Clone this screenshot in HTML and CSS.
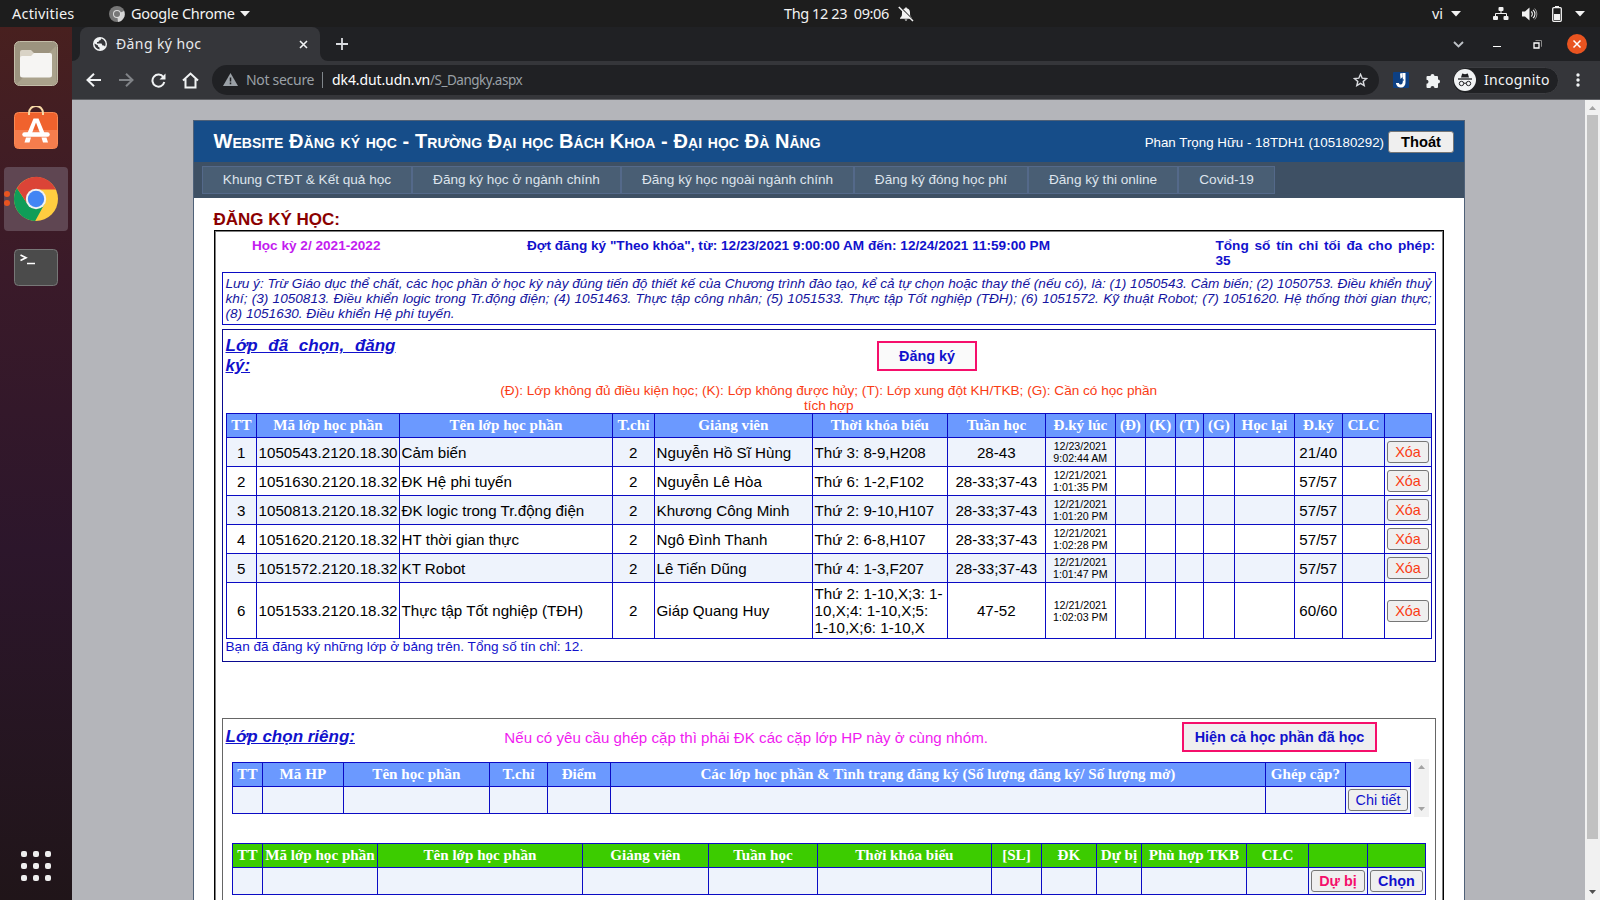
FILE: index.html
```html
<!DOCTYPE html>
<html lang="vi">
<head>
<meta charset="utf-8">
<title>Đăng ký học</title>
<link rel="stylesheet" href="styles.css">
</head>
<body>
<header class="topbar">
  <span class="activities">Activities</span>
  <svg class="tb-chrome" width="16" height="16" viewBox="0 0 16 16"><circle cx="8" cy="8" r="8" fill="#777"/><path d="M8 8 15 5A8 8 0 0 1 9 16z" fill="#d6d6d6"/><circle cx="8" cy="8" r="4" fill="#ddd"/><circle cx="8" cy="8" r="3" fill="#777"/></svg>
  <span class="app-name">Google Chrome</span>
  <svg class="caret" width="10" height="6"><path d="M0 0h10L5 5.5z" fill="#f2f2f2"/></svg>
  <span class="clock">Thg 12 23&nbsp; 09:06</span>
  <svg class="bell" width="16" height="16" viewBox="0 0 16 16"><path d="M2 12c2-1.500 2-3 2-5.500C4 4 5.500 2.600 7.200 2.300V1.500h1.600v.8C10.500 2.600 12 4 12 6.500c0 2.500 0 4 2 5.500v.8H2z" fill="#f2f2f2"/><path d="M6.500 13.500h3L8 15z" fill="#f2f2f2"/><path d="M1.500 .5 15.500 14.500" stroke="#1d1d1d" stroke-width="1.500"/><path d="M.8 1 15 15" stroke="#f2f2f2" stroke-width="1.500"/></svg>
  <span class="lang">vi</span>
  <svg class="caret2" width="10" height="6"><path d="M0 0h10L5 5.500z" fill="#f2f2f2"/></svg>
  <svg class="net" width="16" height="14" viewBox="0 0 16 14"><g fill="#f2f2f2"><rect x="5.500" y="0" width="5" height="4" rx="1"/><rect x="0" y="9" width="5" height="4" rx="1"/><rect x="10.500" y="9" width="5" height="4" rx="1"/></g><path d="M8 4v2.500M2.500 9V6.500h11V9" fill="none" stroke="#f2f2f2"/></svg>
  <svg class="vol" width="16" height="14" viewBox="0 0 16 14"><path d="M0 4.500h3L7.500.5v13L3 9.500H0z" fill="#f2f2f2"/><path d="M9.300 4.500a3.500 3.500 0 0 1 0 5M11 2.800a5.500 5.500 0 0 1 0 8.400" fill="none" stroke="#f2f2f2" stroke-width="1.100"/><path d="M12.700 1.500a8 8 0 0 1 0 11" fill="none" stroke="#999"/></svg>
  <svg class="bat" width="10" height="16" viewBox="0 0 10 16"><rect x=".7" y="1.700" width="8.600" height="13.600" rx="1" fill="none" stroke="#f2f2f2" stroke-width="1.300"/><rect x="3" y="0" width="4" height="1.500" fill="#f2f2f2"/><rect x="2" y="8" width="6" height="6" fill="#f2f2f2"/></svg>
  <svg class="caret3" width="10" height="6"><path d="M0 0h10L5 5.500z" fill="#f2f2f2"/></svg>
</header>
<div class="desktop">
  <aside class="dock">
    <svg class="d-files" width="44" height="45" viewBox="0 0 44 45"><rect x=".5" y=".5" width="43" height="44" rx="5" fill="#9c937f" stroke="#c4bda9"/><path d="M2 43.500 42 5v36a3 3 0 0 1-3 3z" fill="#aaa28c"/><path d="M6 12V11a2 2 0 0 1 2-2h9l3 3h12v5H6z" fill="#d9d3c6"/><path d="M6 17a2 2 0 0 1 2-2h9l3-3h16a2 2 0 0 1 2 2v20a2.500 2.500 0 0 1-2.500 2.500h-27A2.500 2.500 0 0 1 6 34z" fill="#f6f5f3"/></svg>
    <svg class="d-store" width="44" height="43" viewBox="0 0 44 43"><rect x=".5" y="6.500" width="43" height="36" rx="4" fill="#f0622d" stroke="#f98a55"/><path d="M1 24h42v15a3 3 0 0 1-3 3H4a3 3 0 0 1-3-3z" fill="#f57d4d"/><path d="M15 9V7a7 7 0 0 1 14 0v2" fill="none" stroke="#f7d9a6" stroke-width="2"/><path d="M13.500 27 19.500 12.500h5L30.500 27h-4.500L22 16.500 18 27z" fill="#fff"/><path d="M10.500 28.500h23" stroke="#fff" stroke-width="4.500" stroke-linecap="round"/><path d="M12 31.500h5l-1.500 5h-5zM27.500 31.500h5l1.500 5h-5z" fill="#fff"/></svg>
    <div class="d-active">
      <span class="run-dots"><i></i><i></i></span>
      <svg width="44" height="46" viewBox="0 0 44 46"><g transform="translate(22 23)"><circle r="22" fill="#ffcd40"/><path d="M-19.050-11A22 22 0 0 0-.8 22L8.500 5-8.500 5z" fill="#0f9d58"/><path d="M-19.050-11A22 22 0 0 1 20-9.500H0L-8.500 5z" fill="#db4437"/><circle r="10.200" fill="#f1f1f1"/><circle r="8.200" fill="#4285f4"/></g></svg>
    </div>
    <svg class="d-term" width="44" height="37" viewBox="0 0 44 37"><rect x=".5" y=".5" width="43" height="36" rx="4" fill="#4b4b4b" stroke="#777"/><path d="m6.500 6 5.500 2.800-5.500 2.800" fill="none" stroke="#fff" stroke-width="1.700"/><path d="M13 14.500h8" stroke="#fff" stroke-width="1.500"/></svg>
    <svg class="d-grid" width="30" height="30" viewBox="0 0 30 30"><g fill="#eee"><rect width="6" height="6" rx="2"/><rect x="12" width="6" height="6" rx="2"/><rect x="24" width="6" height="6" rx="2"/><rect y="12" width="6" height="6" rx="2"/><rect x="12" y="12" width="6" height="6" rx="2"/><rect x="24" y="12" width="6" height="6" rx="2"/><rect y="24" width="6" height="6" rx="2"/><rect x="12" y="24" width="6" height="6" rx="2"/><rect x="24" y="24" width="6" height="6" rx="2"/></g></svg>
  </aside>
  <div class="browser">
    <div class="tabstrip">
      <svg class="foot" width="8" height="8"><path d="M8 0v8H0a8 8 0 0 0 8-8z" fill="#35363a"/></svg>
      <div class="tab">
        <svg width="14" height="14" viewBox="0 0 14 14"><circle cx="7" cy="7" r="7" fill="#f1f3f4"/><path d="M1.500 6.500 5 8.500v1l1.500 1v2A5.600 5.600 0 0 1 1.500 6.500zM8 1.600c0 1.500-.5 2-2 2L5.500 5H4v1.500h4.500L9.500 8.500h1.500l1 1a5.600 5.600 0 0 0-4-7.900z" fill="#35363a"/></svg>
        <span class="tab-title">Đăng ký học</span>
        <svg width="9" height="9"><path d="m1 1 7 7m0-7-7 7" stroke="#f1f3f4" stroke-width="1.600"/></svg>
      </div>
      <svg class="foot" width="8" height="8"><path d="M0 0v8h8a8 8 0 0 1-8-8z" fill="#35363a"/></svg>
      <svg class="plus" width="12" height="12"><path d="M6 0v12M0 6h12" stroke="#dadce0" stroke-width="1.800"/></svg>
      <svg class="chev" width="11" height="7"><path d="m1 1 4.500 4.500L10 1" fill="none" stroke="#bdc1c6" stroke-width="1.900"/></svg>
      <svg class="min" width="8" height="8"><path d="M0 6.500h8" stroke="#fff"/></svg>
      <svg class="max" width="9" height="9"><path d="M2.500 .5h6v6H8" fill="none" stroke="#888"/><path d="M1 3h5v5H1z" fill="none" stroke="#fff" stroke-width="1.300"/></svg>
      <svg class="close" width="20" height="20"><circle cx="10" cy="10" r="10" fill="#e95420"/><path d="m6.500 6.500 7 7m0-7-7 7" stroke="#fff" stroke-width="1.500"/></svg>
    </div>
    <div class="toolbar">
      <svg class="back" width="16" height="14"><path d="M8 .8 1.500 7 8 13.200M1.500 7H15" fill="none" stroke="#f1f3f4" stroke-width="2"/></svg>
      <svg class="fwd" width="16" height="14"><path d="M8 .8 14.500 7 8 13.200M14.500 7H1" fill="none" stroke="#808387" stroke-width="2"/></svg>
      <svg class="reload" width="15" height="15" viewBox="0 0 15 15"><path d="M12.400 4.200A6 6 0 1 0 13.300 9" fill="none" stroke="#f1f3f4" stroke-width="2"/><path d="M14.500.5v6h-6z" fill="#f1f3f4"/></svg>
      <svg class="home" width="17" height="17" viewBox="0 0 17 17"><path d="M1 8.500 8.500 1.500 16 8.500M3.500 7v8.500h10V7" fill="none" stroke="#f1f3f4" stroke-width="2"/></svg>
      <div class="url">
        <svg width="15" height="13" viewBox="0 0 15 13"><path d="M7.500 0 15 13H0z" fill="#9aa0a6"/><path d="M7.500 4.500v4M7.500 9.500v1.700" stroke="#202124" stroke-width="1.500"/></svg>
        <span class="nots">Not secure</span><i class="bar"></i><span class="addr">dk4.dut.udn.vn</span><span class="path">/S_Dangky.aspx</span>
        <svg class="star" width="15" height="14" viewBox="0 0 15 14"><path d="M7.500 1.300 9.200 5.200l4.200.4-3.200 2.800 1 4.200-3.700-2.200-3.700 2.200 1-4.200L1.600 5.600l4.200-.4z" fill="none" stroke="#dadce0" stroke-width="1.400"/></svg>
      </div>
      <svg class="ext" width="16" height="16" viewBox="0 0 16 16"><rect width="16" height="16" rx="1" fill="#0d4084"/><path d="M11 1v9.500a3.300 3.300 0 0 1-6.600.5" fill="none" stroke="#fff" stroke-width="3"/><path d="M6 8h5M9 5.500v5" stroke="#0d4084" stroke-width="1.200"/><path d="M7 1.500 9.500 1v4L7.500 7z" fill="#fff"/></svg>
      <svg class="puzzle" width="15" height="15" viewBox="0 0 15 15"><path d="M4.500 3a2 2 0 0 1 4 0H11a1 1 0 0 1 1 1v2.500a2 2 0 0 1 0 4V14a1 1 0 0 1-1 1H8.500a2 2 0 0 0-4 0H1.500a1 1 0 0 1-1-1v-3.300a2 2 0 0 0 0-4V4a1 1 0 0 1 1-1z" fill="#f1f3f4"/></svg>
      <div class="incog">
        <svg width="22" height="22" viewBox="0 0 22 22"><circle cx="11" cy="11" r="11" fill="#f1f3f4"/><path d="M7 8.500 8.200 4.500 11 5.200l2.800-.7L15 8.500z" fill="#202124"/><path d="M4 10h14" stroke="#202124" stroke-width="1.300"/><circle cx="7.500" cy="14.500" r="2.200" fill="none" stroke="#202124"/><circle cx="14.500" cy="14.500" r="2.200" fill="none" stroke="#202124"/><path d="M9.700 14.200h2.600" stroke="#202124"/></svg>
        <span>Incognito</span>
      </div>
      <svg class="kebab" width="4" height="14"><g fill="#f1f3f4"><circle cx="2" cy="2" r="1.700"/><circle cx="2" cy="7" r="1.700"/><circle cx="2" cy="12" r="1.700"/></g></svg>
    </div>
    <div class="viewport">
      <main class="page">
        <div class="banner">
          <h1>Website Đăng ký học - Trường Đại học Bách Khoa - Đại học Đà Nẵng</h1>
          <span class="user">Phan Trọng Hữu - 18TDH1 (105180292)</span>
          <button class="btn logout">Thoát</button>
        </div>
        <nav class="menu">
          <a class="m1">Khung CTĐT &amp; Kết quả học</a><a class="m2">Đăng ký học ở ngành chính</a><a class="m3">Đăng ký học ngoài ngành chính</a><a class="m4">Đăng ký đóng học phí</a><a class="m5">Đăng ký thi online</a><a class="m6">Covid-19</a>
        </nav>
        <h2>ĐĂNG KÝ HỌC:</h2>
        <section class="frame">
          <div class="info">
            <span class="term">Học kỳ 2/ 2021-2022</span>
            <span class="period">Đợt đăng ký "Theo khóa", từ: 12/23/2021 9:00:00 AM đến: 12/24/2021 11:59:00 PM</span>
            <span class="limit">Tổng số tín chỉ tối đa cho phép: 35</span>
          </div>
          <p class="note">Lưu ý: Trừ Giáo dục thể chất, các học phần ở học kỳ này đúng tiến độ thiết kế của Chương trình đào tạo, kể cả tự chọn hoặc thay thế (nếu có), là: (1) 1050543. Cảm biến; (2) 1050753. Điều khiển thuỷ khí; (3) 1050813. Điều khiển logic trong Tr.động điện; (4) 1051463. Thực tập công nhân; (5) 1051533. Thực tập Tốt nghiệp (TĐH); (6) 1051572. Kỹ thuật Robot; (7) 1051620. Hệ thống thời gian thực; (8) 1051630. Điều khiển Hệ phi tuyến.</p>
          <div class="chosen">
            <div class="chosen-head">
              <h3>Lớp đã chọn, đăng ký:</h3>
              <button class="pink reg">Đăng ký</button>
            </div>
            <p class="legend">(Đ): Lớp không đủ điều kiện học; (K): Lớp không được hủy; (T): Lớp xung đột KH/TKB; (G): Cần có học phần tích hợp</p>
            <table class="t1">
              <colgroup><col style="width:30px"><col style="width:143px"><col style="width:213px"><col style="width:42px"><col style="width:158px"><col style="width:135px"><col style="width:98px"><col style="width:70px"><col style="width:30px"><col style="width:30px"><col style="width:28px"><col style="width:31px"><col style="width:60px"><col style="width:48px"><col style="width:42px"><col style="width:47px"></colgroup>
              <tr><th>TT</th><th>Mã lớp học phần</th><th>Tên lớp học phần</th><th>T.chỉ</th><th>Giảng viên</th><th>Thời khóa biểu</th><th>Tuần học</th><th>Đ.ký lúc</th><th>(Đ)</th><th>(K)</th><th>(T)</th><th>(G)</th><th>Học lại</th><th>Đ.ký</th><th>CLC</th><th></th></tr>
              <tr class="alt"><td class="c">1</td><td>1050543.2120.18.30</td><td>Cảm biến</td><td class="c">2</td><td>Nguyễn Hồ Sĩ Hùng</td><td>Thứ 3: 8-9,H208</td><td class="c">28-43</td><td class="when">12/23/2021<br>9:02:44 AM</td><td></td><td></td><td></td><td></td><td></td><td class="c">21/40</td><td></td><td class="act"><button class="btn del">Xóa</button></td></tr>
              <tr><td class="c">2</td><td>1051630.2120.18.32</td><td>ĐK Hệ phi tuyến</td><td class="c">2</td><td>Nguyễn Lê Hòa</td><td>Thứ 6: 1-2,F102</td><td class="c">28-33;37-43</td><td class="when">12/21/2021<br>1:01:35 PM</td><td></td><td></td><td></td><td></td><td></td><td class="c">57/57</td><td></td><td class="act"><button class="btn del">Xóa</button></td></tr>
              <tr class="alt"><td class="c">3</td><td>1050813.2120.18.32</td><td>ĐK logic trong Tr.động điện</td><td class="c">2</td><td>Khương Công Minh</td><td>Thứ 2: 9-10,H107</td><td class="c">28-33;37-43</td><td class="when">12/21/2021<br>1:01:20 PM</td><td></td><td></td><td></td><td></td><td></td><td class="c">57/57</td><td></td><td class="act"><button class="btn del">Xóa</button></td></tr>
              <tr><td class="c">4</td><td>1051620.2120.18.32</td><td>HT thời gian thực</td><td class="c">2</td><td>Ngô Đình Thanh</td><td>Thứ 2: 6-8,H107</td><td class="c">28-33;37-43</td><td class="when">12/21/2021<br>1:02:28 PM</td><td></td><td></td><td></td><td></td><td></td><td class="c">57/57</td><td></td><td class="act"><button class="btn del">Xóa</button></td></tr>
              <tr class="alt"><td class="c">5</td><td>1051572.2120.18.32</td><td>KT Robot</td><td class="c">2</td><td>Lê Tiến Dũng</td><td>Thứ 4: 1-3,F207</td><td class="c">28-33;37-43</td><td class="when">12/21/2021<br>1:01:47 PM</td><td></td><td></td><td></td><td></td><td></td><td class="c">57/57</td><td></td><td class="act"><button class="btn del">Xóa</button></td></tr>
              <tr class="tall"><td class="c">6</td><td>1051533.2120.18.32</td><td>Thực tập Tốt nghiệp (TĐH)</td><td class="c">2</td><td>Giáp Quang Huy</td><td class="wrap">Thứ 2: 1-10,X;3: 1-<br>10,X;4: 1-10,X;5:<br>1-10,X;6: 1-10,X</td><td class="c">47-52</td><td class="when">12/21/2021<br>1:02:03 PM</td><td></td><td></td><td></td><td></td><td></td><td class="c">60/60</td><td></td><td class="act"><button class="btn del">Xóa</button></td></tr>
            </table>
            <p class="total">Bạn đã đăng ký những lớp ở bảng trên. Tổng số tín chỉ: 12.</p>
          </div>
          <div class="private">
            <div class="private-head">
              <h3>Lớp chọn riêng:</h3>
              <span class="pair">Nếu có yêu cầu ghép cặp thì phải ĐK các cặp lớp HP này ở cùng nhóm.</span>
              <button class="pink showall">Hiện cả học phần đã học</button>
            </div>
            <div class="scroller">
              <table class="t2">
                <colgroup><col style="width:30px"><col style="width:81px"><col style="width:146px"><col style="width:58px"><col style="width:63px"><col style="width:655px"><col style="width:80px"><col style="width:65px"></colgroup>
                <tr><th>TT</th><th>Mã HP</th><th>Tên học phần</th><th>T.chỉ</th><th>Điểm</th><th>Các lớp học phần &amp; Tình trạng đăng ký (Số lượng đăng ký/ Số lượng mở)</th><th>Ghép cặp?</th><th></th></tr>
                <tr class="alt"><td></td><td></td><td></td><td></td><td></td><td></td><td></td><td class="act"><button class="btn detail">Chi tiết</button></td></tr>
              </table>
              <div class="innerbar"><svg width="7" height="4"><path d="M0 4h7L3.500 0z" fill="#a3a3a3"/></svg><svg width="7" height="4"><path d="M0 0h7L3.500 4z" fill="#a3a3a3"/></svg></div>
            </div>
            <table class="t3">
              <colgroup><col style="width:30px"><col style="width:115px"><col style="width:205px"><col style="width:126px"><col style="width:109px"><col style="width:174px"><col style="width:50px"><col style="width:55px"><col style="width:45px"><col style="width:105px"><col style="width:62px"><col style="width:59px"><col style="width:58px"></colgroup>
              <tr><th>TT</th><th>Mã lớp học phần</th><th>Tên lớp học phần</th><th>Giảng viên</th><th>Tuần học</th><th>Thời khóa biểu</th><th>[SL]</th><th>ĐK</th><th>Dự bị</th><th>Phù hợp TKB</th><th>CLC</th><th></th><th></th></tr>
              <tr class="alt"><td></td><td></td><td></td><td></td><td></td><td></td><td></td><td></td><td></td><td></td><td></td><td class="act"><button class="btn reserve">Dự bị</button></td><td class="act"><button class="btn pick">Chọn</button></td></tr>
            </table>
          </div>
        </section>
      </main>
      <div class="scrollbar">
        <svg width="7" height="4"><path d="M0 4h7L3.500 0z" fill="#a3a3a3"/></svg>
        <div class="thumb"></div>
        <svg class="down" width="7" height="4"><path d="M0 0h7L3.500 4z" fill="#505050"/></svg>
      </div>
    </div>
  </div>
</div>
</body>
</html>
```

FILE: styles.css
```css
* { box-sizing: border-box; }
body { margin: 0; width: 1600px; height: 900px; overflow: hidden; display: flex; flex-direction: column; font-family: "Liberation Sans", sans-serif; font-size: 13.6px; }
svg { display: block; flex: none; }
h1, h2, h3, p { margin: 0; }
button { font-family: "Liberation Sans", sans-serif; padding: 0; }

.topbar { height: 27px; flex: none; background: #1d1d1d; color: #f2f2f2; font: 14.5px "Noto Sans", sans-serif; display: flex; align-items: center; white-space: pre; }
.topbar span { padding-bottom: 2px; }
.activities { margin-left: 12px; width: 97px; letter-spacing: .2px; }
.app-name { margin-left: 6px; width: 109px; letter-spacing: -.25px; }
.clock { margin-left: 534px; width: 114px; letter-spacing: -.4px; }
.lang { margin-left: 518px; width: 19px; }
.net { margin-left: 32px; }
.vol { margin-left: 13px; }
.bat { margin-left: 14px; }
.caret3 { margin-left: 13px; }

.desktop { flex: 1; display: flex; min-height: 0; }
.dock { width: 72px; background: linear-gradient(#48201f, #3a1a29 28%, #2c162b 60%, #201519); display: flex; flex-direction: column; align-items: center; flex: none; }
.d-files { margin-top: 14px; }
.d-store { margin-top: 20px; }
.d-active { margin-top: 18px; width: 64px; height: 64px; border-radius: 4px; background: #5f4652; display: flex; align-items: center; justify-content: center; position: relative; }
.run-dots { position: absolute; left: 0; top: 24px; display: grid; gap: 3px; }
.run-dots i { width: 6px; height: 6px; border-radius: 3px; background: #e95420; }
.d-term { margin-top: 18px; }
.d-grid { margin-top: auto; margin-bottom: 19px; }

.browser { flex: 1; min-width: 0; display: flex; flex-direction: column; }
.tabstrip { height: 34px; background: #202124; display: flex; align-items: center; flex: none; }
.foot { align-self: flex-end; }
.tab { width: 240px; height: 34px; border-radius: 8px 8px 0 0; background: #35363a; display: flex; align-items: center; padding: 0 12px 0 13px; color: #e8eaed; font: 14px "Noto Sans", sans-serif; }
.tab-title { flex: 1; margin-left: 9px; padding-bottom: 2px; letter-spacing: .4px; }
.plus { margin-left: 8px; }
.chev { margin-left: auto; }
.min { margin-left: 29px; }
.max { margin-left: 32px; }
.close { margin: 0 13px 0 25px; }
.toolbar { height: 39px; background: #35363a; border-bottom: 1px solid #606165; display: flex; align-items: center; flex: none; }
.back { margin-left: 14px; }
.fwd { margin-left: 16px; }
.reload { margin-left: 17px; }
.home { margin-left: 16px; }
.url { margin-left: 13px; flex: 1; height: 30px; margin-bottom: 1px; border-radius: 15px; background: #202124; display: flex; align-items: center; padding: 0 11px; font: 14px "Noto Sans", sans-serif; white-space: pre; }
.url span { padding-bottom: 1px; }
.nots { margin-left: 8px; width: 76px; color: #9aa0a6; letter-spacing: -.3px; }
.bar { width: 1px; height: 16px; background: #80868b; margin-right: 9px; }
.addr { color: #fff; letter-spacing: -.1px; }
.url .path { color: #9aa0a6; font-size: 13.5px; letter-spacing: -.48px; padding-bottom: 0; }
.star { margin-left: auto; }
.ext { margin-left: 14px; }
.puzzle { margin-left: 17px; }
.incog { margin-left: 11px; width: 107px; height: 27px; border-radius: 14px; background: #202124; border: 1px solid #3c3d41; display: flex; align-items: center; padding-left: 1px; color: #f1f3f4; font: 14px "Noto Sans", sans-serif; }
.incog span { margin-left: 8px; padding-bottom: 2px; letter-spacing: .3px; }
.kebab { margin: 0 20px 0 17px; }

.viewport { flex: 1; min-height: 0; background: #b4b5ba; display: flex; justify-content: space-between; overflow: hidden; }
.page { width: 1272px; height: 1200px; flex: none; margin: 20px 0 0 121px; background: #fff; border: 1px solid #4f6178; }
.scrollbar { width: 15px; background: #f1f1f1; display: flex; flex-direction: column; align-items: center; padding-top: 6px; }
.thumb { width: 11px; height: 724px; margin-top: 5px; background: #c1c1c1; }
.down { margin-top: 51px; }

.banner { height: 41px; background: #164d89; color: #fff; display: flex; align-items: center; padding: 0 10px 0 19.5px; white-space: nowrap; }
.banner h1 { font-size: 20px; font-variant: small-caps; letter-spacing: .065px; line-height: 24px; flex: 1; padding-bottom: 2px; }
.user { margin: 2px 4px 0 0; font-size: 13.33px; }
.btn { height: 22px; border: 1px solid #767676; border-radius: 3px; background: #efefef; font-size: 14.4px; line-height: 18px; display: block; white-space: nowrap; }
.logout { width: 66px; font-weight: bold; color: #000; font-size: 14.67px; }
.menu { height: 36px; background: #3e5064; display: flex; padding: 4px 8px; }
.menu a { height: 28px; background: #495e74; border: 1px solid #54698a; color: #dde4ec; line-height: 25px; text-align: center; white-space: nowrap; }
.m1 { width: 210px; } .m2 { width: 209px; } .m3 { width: 233px; } .m4 { width: 174px; } .m5 { width: 150px; } .m6 { width: 97px; }
.page h2 { font-size: 17px; line-height: 20px; color: #8b0000; margin: 12px 0 0 19.400px; }

.frame { width: 1230px; margin-left: 20px; height: 1000px; border: 1px solid #000; box-shadow: inset 0 0 0 1px #808080; padding: 7px 7px 0 7px; }
.info { height: 34px; display: flex; color: #1111cc; font-weight: bold; line-height: 15px; white-space: nowrap; padding-left: 30px; }
.term { color: #c31cf0; width: 275px; }
.period { width: 688.5px; }
.limit { width: 219.5px; text-align: justify; white-space: normal; }
.note { border: 1px solid #0b0bc4; color: #1414a0; height: 53px; font-style: italic; line-height: 15px; padding: 3px 3.5px 3px 2.5px; text-align: justify; }
.chosen { margin-top: 4px; height: 333px; border: 1px solid #0a0a90; padding: 0 3px 0 2.5px; }
.chosen-head { display: flex; height: 52px; }
.page h3 { width: 170px; margin-top: 6px; font-size: 17px; line-height: 20px; font-style: italic; text-decoration: underline; color: #1111cc; text-align: justify; }
.pink { border: 2px solid #f50f6b; background: #efefef; color: #1111cc; font-weight: bold; font-size: 14.4px; height: 30px; white-space: nowrap; }
.reg { margin: 11px 0 0 481.5px; width: 100px; background: #fafafa; }
.legend { width: 660px; margin: 0 auto; color: #fa3c14; line-height: 15px; text-align: center; height: 31px; padding-top: 1px; }

table { border-collapse: collapse; table-layout: fixed; font-size: 15.15px; line-height: 17px; color: #000; }
th, td { border: 1px solid #0b0bc4; padding: 0 2px 0 1.600px; white-space: nowrap; text-align: left; }
th { background: #6b99ff; color: #fff; font: bold 15.12px/17px "Liberation Serif", serif; text-align: center; height: 24px; padding: 0 .2px 0 0; }
td { height: 29px; padding-top: 1px; }
.alt td { background: #eef3fc; }
.c { text-align: center; padding-left: 1.500px; }
.when { font-size: 10.67px; line-height: 12px; text-align: center; padding-top: 0; }
.tall td { height: 56px; padding-top: 0; }
td.act { padding: 0 2px; }
.t1 { width: 1206px; margin-left: .5px; }
.del { width: 42px; color: #fa3c14; }
.total { color: #1111cc; line-height: 15px; }
.private { margin-top: 56px; height: 400px; border: 1px solid #666; padding: 0 3px 0 2.5px; }
.private-head { display: flex; height: 40px; white-space: nowrap; }
.private-head h3 { margin-top: 8px; }
.pair { margin: 10px 0 0 108.800px; width: 677.700px; font-size: 15.13px; line-height: 17px; color: #f01cf0; }
.showall { margin-top: 3px; width: 195px; }
.scroller { height: 58px; display: flex; margin-left: 6.5px; }
.t2 { width: 1179px; margin-top: 3px; align-self: flex-start; }
.t2 td, .t3 td { height: 27px; }
.innerbar { width: 15px; height: 58px; margin-left: 3px; background: #f1f1f1; display: flex; flex-direction: column; align-items: center; justify-content: space-between; padding: 6px 0; }
.detail { width: 60px; color: #1111cc; }
.t3 { width: 1194px; margin: 26px 0 0 6.5px; }
.t3 th { background: #3ccc00; }
.reserve { width: 54px; font-weight: bold; color: #f50f6b; }
.pick { width: 53px; font-weight: bold; color: #1111cc; }
```
